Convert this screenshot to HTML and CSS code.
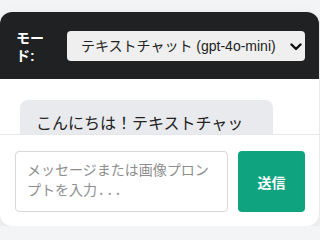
FILE: index.html
```html
<!DOCTYPE html>
<html lang="ja">
<head>
<meta charset="utf-8">
<title>チャット</title>
<link rel="stylesheet" href="styles.css">
</head>
<body>
<div class="app">
  <header class="header">
    <label class="mode-label" for="mode">モード:</label>
    <div class="select-wrap">
      <select id="mode" class="mode-select">
        <option>テキストチャット (gpt-4o-mini)</option>
        <option>画像生成</option>
      </select>
      <svg class="chevron" width="12" height="8" viewBox="0 0 12 8" aria-hidden="true">
        <path d="M1.5 1.5 L6 6 L10.5 1.5" fill="none" stroke="#111" stroke-width="2.4" stroke-linecap="round" stroke-linejoin="round"/>
      </svg>
    </div>
  </header>
  <main class="chat">
    <div class="bubble">こんにちは！テキストチャットモードです。何でも聞いてください。</div>
  </main>
  <form class="composer">
    <textarea class="input" placeholder="メッセージまたは画像プロンプトを入力..."></textarea>
    <button type="button" class="send">送信</button>
  </form>
</div>
</body>
</html>
```

FILE: styles.css
```css
* { box-sizing: border-box; }
html, body { margin: 0; padding: 0; }
body {
  background: #f3f4f6;
  font-family: "Liberation Sans", "Noto Sans CJK JP", sans-serif;
  padding-top: 12px;
}
.app {
  width: 319px;
  height: 214px;
  background: #fff;
  border-radius: 12px;
  overflow: hidden;
  display: flex;
  flex-direction: column;
  box-shadow: 0 4px 14px rgba(0, 0, 0, 0.08);
}
.header {
  flex: 0 0 67px;
  background: #202123;
  display: flex;
  align-items: center;
  padding: 0 14px 0 16px;
}
.mode-label {
  color: #fff;
  font-weight: bold;
  font-size: 14px;
  line-height: 18px;
  width: 30px;
  margin-right: 21px;
  margin-top: 2px;
}
.select-wrap {
  position: relative;
  width: 238px;
  height: 30px;
}
.mode-select {
  appearance: none;
  -webkit-appearance: none;
  width: 100%;
  height: 100%;
  border: none;
  border-radius: 4px;
  background: #efefef;
  color: #222;
  font-family: inherit;
  font-size: 14px;
  padding: 0 16px 0 14px;
}
.chevron {
  position: absolute;
  right: 3px;
  top: 12px;
  pointer-events: none;
}
.chat {
  flex: 1;
  overflow: hidden;
  padding: 21px 20px;
}
.bubble {
  width: 253px;
  background: #e9eaed;
  border-radius: 8px;
  padding: 12px 16px;
  font-size: 16px;
  line-height: 24px;
  color: #222;
}
.composer {
  margin: 0;
  border-top: 1px solid #e5e7eb;
  padding: 16px 14px 14px 15px;
  display: flex;
  gap: 10px;
}
.input {
  width: 213px;
  height: 61px;
  border: 1px solid #d6d8dc;
  border-radius: 4px;
  padding: 9px 11px;
  font-family: "Liberation Mono", "Noto Sans CJK JP", monospace;
  font-size: 14px;
  line-height: 20px;
  resize: none;
  color: #222;
}
.input::placeholder { color: #8e8e8e; }
.send {
  width: 67px;
  height: 61px;
  border: none;
  border-radius: 4px;
  background: #10a37f;
  color: #fff;
  font-family: inherit;
  font-size: 14px;
  font-weight: bold;
}
```
